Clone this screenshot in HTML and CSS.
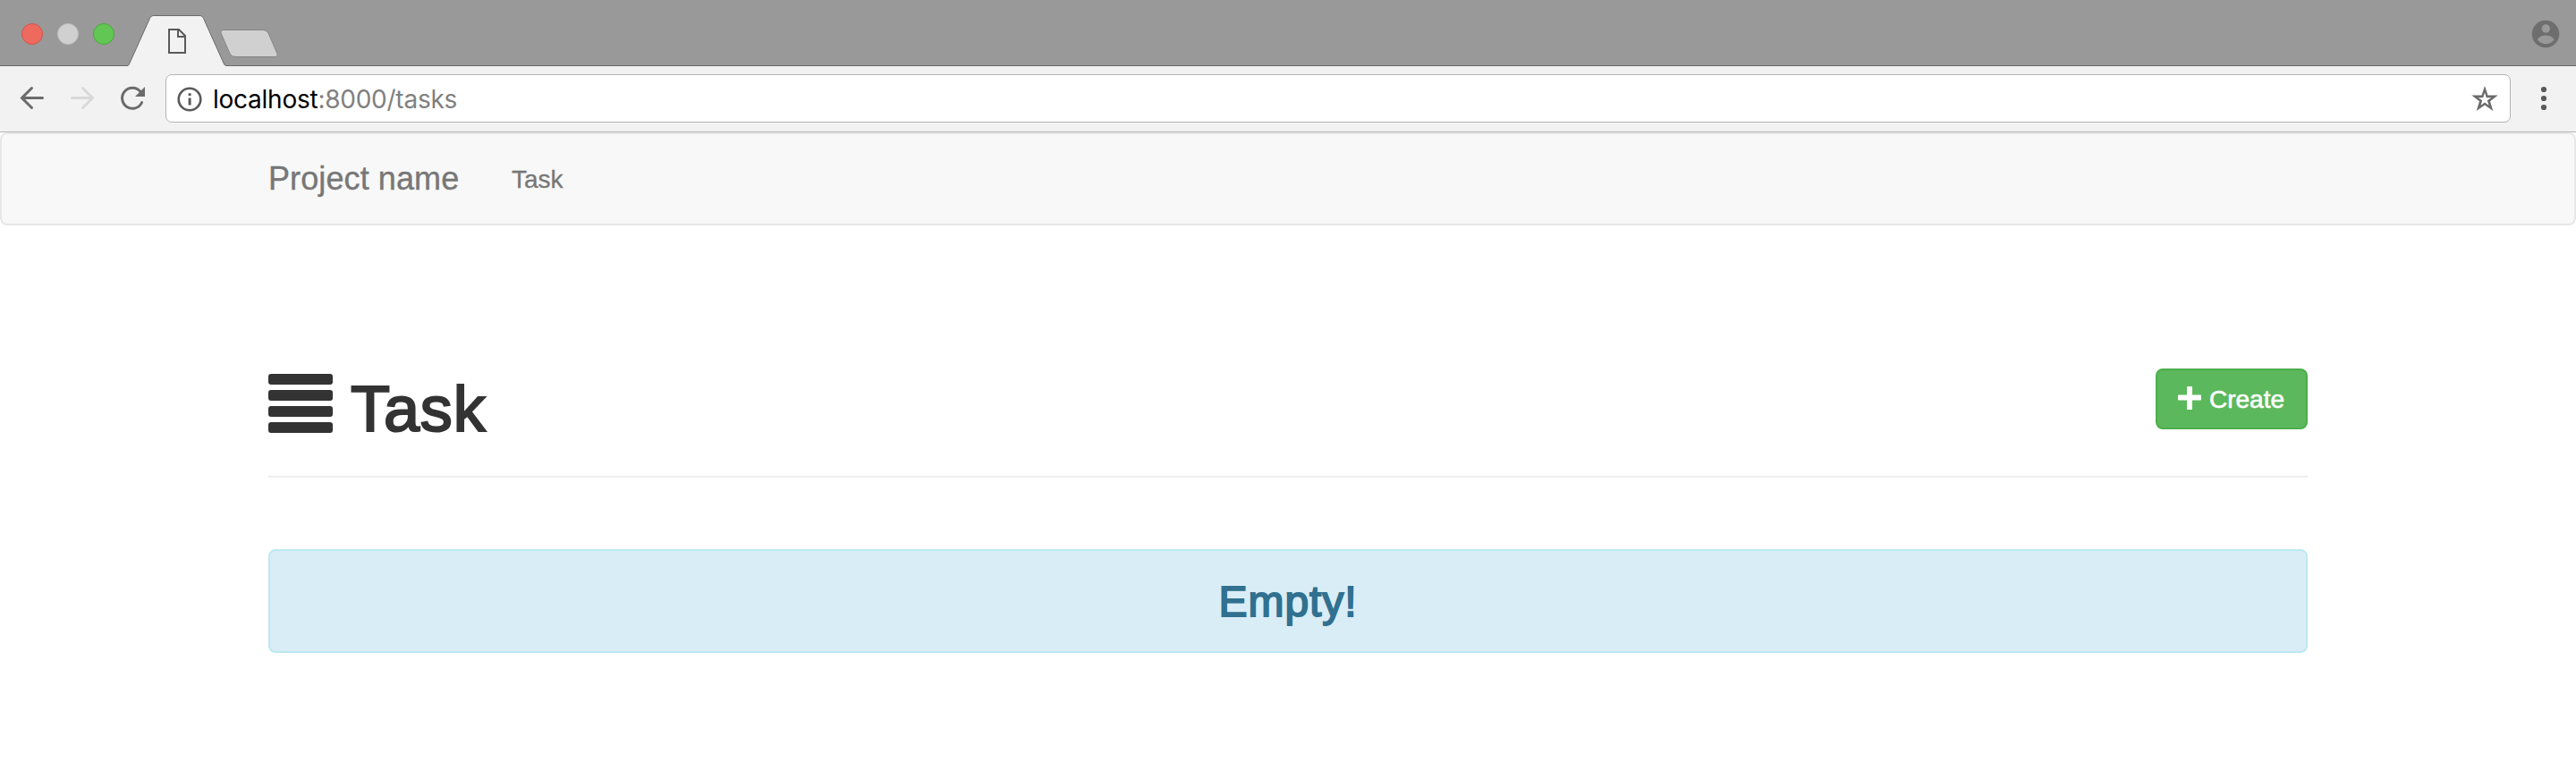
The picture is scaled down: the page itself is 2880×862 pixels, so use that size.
FILE: index.html
```html
<!DOCTYPE html>
<html lang="en">
<head>
<meta charset="utf-8">
<title>Task</title>
<link rel="stylesheet" href="styles.css">
</head>
<body>
<header class="tabstrip">
  <div class="lights"><i class="light red"></i><i class="light gray"></i><i class="light green"></i></div>
  <svg class="tabs" width="176" height="74" viewBox="0 0 176 74">
    <path d="M-1 74V73.500Q0 73 1 70.500L23.500 20.500Q25 17.500 27 17.500H80Q82 17.500 83.500 20.500L106 70.500Q107 73.500 109 73.500V74Z" fill="#f2f2f2"/>
    <path d="M-1 73.500Q0 73 1 70.500L23.500 20.500Q25 17.500 27 17.500H80Q82 17.500 83.500 20.500L106 70.500Q107 73.500 109 73.500" fill="none" stroke="#6b6b6b"/>
    <path d="M45 33H56L63 40V59H45ZM55 33V41H63" fill="none" stroke="#5a5a5a" stroke-width="2"/>
    <path d="M105 33.500H150Q154 33.500 156 37L166 60Q167 63.500 164 63.500H119Q115 63.500 113 60L103 37Q102 33.500 105 33.500Z" fill="#d0d0d0" stroke="#858585"/>
  </svg>
  <svg class="profile" width="32" height="32" viewBox="0 0 32 32">
    <circle cx="16" cy="16" r="15.300" fill="#6e6e6e"/>
    <circle cx="16.300" cy="10" r="4.700" fill="#999"/>
    <path d="M6.800 22.300C9 19 13 17.600 16.200 17.600S23.500 19 25.600 22.300C23.500 25.500 20 27.200 16.200 27.200S9 25.500 6.800 22.300Z" fill="#999"/>
  </svg>
</header>
<div class="toolbar">
  <svg class="nav-icons" width="146" height="32" viewBox="0 0 146 32">
    <path d="M27.500 15.500H4.500M15.500 4.500L4.500 15.500L15.500 26.500" fill="none" stroke="#6b6b6b" stroke-width="3" stroke-linecap="round"/>
    <path d="M60.500 15.500H83M72.500 4.500L83.500 15.500L72.500 26.500" fill="none" stroke="#d9d9d9" stroke-width="3" stroke-linecap="round"/>
    <path d="M137 8.500A11.500 11.500 0 1 0 138.600 20.500" fill="none" stroke="#6b6b6b" stroke-width="3" stroke-linecap="round"/>
    <path d="M142 3V14H131Z" fill="#6b6b6b"/>
  </svg>
  <div class="address">
    <svg class="info" width="28" height="28" viewBox="0 0 28 28">
      <circle cx="14" cy="14" r="12.300" fill="none" stroke="#5a5a5a" stroke-width="2.600"/>
      <path d="M12.600 7.200H15.600V10H12.600ZM12.600 12.500H15.600V20.500H12.600Z" fill="#5a5a5a"/>
    </svg>
    <span class="url"><b class="host">localhost</b>:8000/tasks</span>
    <svg class="star" width="32" height="32" viewBox="0 0 32 32">
      <path d="M16 1L19.500 11.400L30.700 11.400L22 18.200L25.300 29L16 22.600L6.700 29L10 18.200L1.300 11.400L12.500 11.400ZM16 8.500L14.200 14.200L8.700 14.200L13.200 17.300L11.500 22.800L16 19.600L20.500 22.800L18.800 17.300L23.300 14.200L17.800 14.200Z" fill="#6b6b6b" fill-rule="evenodd"/>
    </svg>
  </div>
  <svg class="menu" width="8" height="28" viewBox="0 0 8 28"><g fill="#5a5a5a"><circle cx="4" cy="4" r="3.100"/><circle cx="4" cy="14" r="3.100"/><circle cx="4" cy="24" r="3.100"/></g></svg>
</div>
<nav class="navbar">
  <a class="brand">Project name</a>
  <a class="nav-link">Task</a>
</nav>
<main class="container">
  <div class="page-header">
    <h1 class="title"><span class="bars"><i></i><i></i><i></i><i></i></span><span class="title-text">Task</span></h1>
    <a class="create"><svg class="plus" width="26" height="26" viewBox="0 0 26 26"><path d="M10 1Q10 0 11 0H15Q16 0 16 1V9.500H25Q26 9.500 26 10.500V14.500Q26 15.500 25 15.500H16V25Q16 26 15 26H11Q10 26 10 25V15.500H1Q0 15.500 0 14.500V10.500Q0 9.500 1 9.500H10Z" fill="#fff"/></svg><span class="create-text">Create</span></a>
  </div>
  <div class="alert"><span class="alert-text">Empty!</span></div>
</main>
</body>
</html>
```

FILE: styles.css
```css
* { box-sizing: border-box; }
body { margin: 0; background: #fff; font-family: "Liberation Sans", Arial, sans-serif; height: 862px; overflow: hidden; }
svg { display: block; flex: none; }

.tabstrip { display: flex; height: 74px; background: #999; border-bottom: 1px solid #6b6b6b; padding-left: 24px; }
.lights { display: flex; gap: 16px; padding-top: 26px; width: 120px; }
.light { width: 24px; height: 24px; border-radius: 50%; border: 1px solid; }
.red { background: #ee6a5f; border-color: #d3534a; }
.gray { background: #d0d0d0; border-color: #bdbdbd; }
.green { background: #61c654; border-color: #4ba83f; }
.tabs { height: 74px; overflow: visible; }
.profile { margin: 22px 18px 0 auto; }

.toolbar { display: flex; align-items: flex-start; height: 74px; background: #f2f2f2; border-bottom: 1px solid #b3b3b3; padding: 9px 32px 0 20px; }
.nav-icons { margin: 11px 19px 0 0; }
.address { display: flex; flex: 1; height: 54px; background: #fff; border: 1px solid #b3b3b3; border-radius: 7px; padding: 0 12px 0 12px; }
.info { margin: 13px 12px 0 0; }
.url { font: 28px/54px Inter, Roboto, sans-serif; letter-spacing: -0.25px; color: #808080; white-space: nowrap; }
.host { font-weight: 400; color: #000; }
.star { margin: 11px 0 0 auto; }
.menu { margin: 13px 0 0 33px; }

.navbar { display: flex; align-items: flex-start; height: 104px; background: #f8f8f8; border: 2px solid #e7e7e7; border-radius: 8px; padding-left: 298px; color: #777; }
.brand { font-size: 36px; line-height: 40px; letter-spacing: 0.1px; padding-top: 30px; width: 272px; white-space: nowrap; -webkit-text-stroke: 0.4px #777; }
.nav-link { font-size: 28px; line-height: 40px; padding-top: 31px; -webkit-text-stroke: 0.3px #777; }

.container { width: 2280px; margin: 160px auto 0; }
.page-header { display: flex; justify-content: space-between; align-items: flex-start; height: 122px; border-bottom: 2px solid #eee; }
.title { display: flex; margin: 0; font-weight: 400; font-size: 72px; line-height: 80px; color: #333; }
.bars { display: flex; flex-direction: column; gap: 6px; width: 72px; margin: 6px 20px 0 0; }
.bars i { height: 12px; border-radius: 3px; background: #333; }
.title-text { padding-top: 5px; letter-spacing: 0.9px; -webkit-text-stroke: 2.2px #333; }
.create { display: flex; width: 170px; height: 68px; background: #5cb85c; border: 2px solid #4cae4c; border-radius: 8px; padding: 18px 0 0 23px; color: #fff; font-size: 28px; line-height: 32px; }
.create-text { margin: -1px 0 0 9px; -webkit-text-stroke: 0.6px #fff; }
.alert { display: flex; justify-content: center; height: 116px; margin-top: 80px; background: #d9edf7; border: 2px solid #bce8f1; border-radius: 8px; color: #31708f; font-size: 48px; line-height: 52px; padding-top: 31px; }
.alert-text { letter-spacing: 0.9px; -webkit-text-stroke: 1.9px #31708f; }
```
